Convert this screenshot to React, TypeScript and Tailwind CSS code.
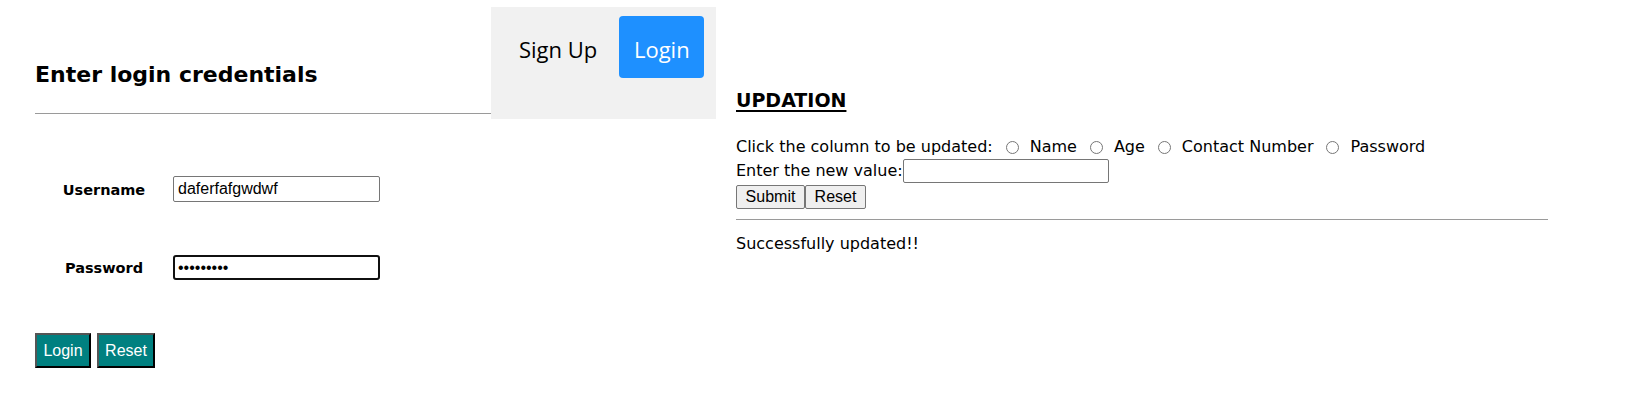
import React from "react";

const comic = { fontFamily: '"DejaVu Sans", sans-serif' };

export default function App() {
  return (
    <div className="w-[1649px] h-[406px] bg-white text-black flex pt-[7px]" style={comic}>
      {/* Left column */}
      <div className="ml-[35px] w-[681px] flex flex-col">
        <div className="flex">
          <div className="flex-1 flex flex-col">
            <h2 className="mt-[54px] h-[28px] leading-[28px] text-[22px] font-bold">Enter login credentials</h2>
            <div className="mt-[24px] h-px bg-[#9a9a9a]" />
          </div>
          <div className="w-[225px] h-[112px] bg-[#f1f1f1] flex items-start pt-[9px]" style={{ fontFamily: '"Open Sans", sans-serif' }}>
            <div className="ml-[28px] h-[62px] pt-[4px] flex items-center text-[22px]">Sign Up</div>
            <div className="ml-[22px] w-[85px] h-[62px] pt-[4px] rounded-[4px] bg-[#1e90ff] text-white flex items-center justify-center text-[22px]">
              Login
            </div>
          </div>
        </div>

        <div className="mt-[57px] flex items-center h-[26px]">
          <div className="w-[138px] pt-[3px] text-center text-[14.5px] font-bold">Username</div>
          <input
            readOnly
            value="daferfafgwdwf"
            className="w-[207px] h-[26px] border border-[#767676] rounded-[2px] px-[4px] text-[16px] outline-none"
            style={{ fontFamily: '"Liberation Sans", Arial, sans-serif' }}
          />
        </div>

        <div className="mt-[53px] flex items-center h-[25px]">
          <div className="w-[138px] pt-[2px] text-center text-[14.5px] font-bold">Password</div>
          <input
            readOnly
            type="password"
            value="123456789"
            className="w-[207px] h-[25px] border-2 border-[#101010] rounded-[3px] px-[3px] text-[16px] outline-none"
            style={{ fontFamily: '"Liberation Sans", Arial, sans-serif' }}
          />
        </div>

        <div className="mt-[53px] flex gap-[6px]" style={{ fontFamily: '"Liberation Sans", Arial, sans-serif' }}>
          <button className="w-[56px] h-[35px] bg-[#008080] text-white text-[16px] border-2 border-t-[#555] border-l-[#555] border-b-black border-r-black">
            Login
          </button>
          <button className="w-[58px] h-[35px] bg-[#008080] text-white text-[16px] border-2 border-t-[#555] border-l-[#555] border-b-black border-r-black">
            Reset
          </button>
        </div>
      </div>

      {/* Right column */}
      <div className="ml-[20px] w-[812px] flex flex-col">
        <h3 className="mt-[81px] h-[24px] leading-[24px] text-[19px] font-bold underline underline-offset-[3px] decoration-[1.5px]">
          UPDATION
        </h3>
        <div className="mt-[24px] h-[22px] leading-[22px] flex items-center text-[16px]">
          <span>Click the column to be updated:</span>
          <input type="radio" name="col" className="w-[13px] h-[13px] ml-[13px] mr-[11px] m-0" />
          <span>Name</span>
          <input type="radio" name="col" className="w-[13px] h-[13px] ml-[13px] mr-[11px] m-0" />
          <span>Age</span>
          <input type="radio" name="col" className="w-[13px] h-[13px] ml-[13px] mr-[11px] m-0" />
          <span>Contact Number</span>
          <input type="radio" name="col" className="w-[13px] h-[13px] ml-[13px] mr-[11px] m-0" />
          <span>Password</span>
        </div>
        <div className="mt-px h-[24px] flex items-center text-[16px]">
          <span>Enter the new value:</span>
          <input className="w-[206px] h-[24px] border border-[#767676] rounded-[2px] outline-none" />
        </div>
        <div className="mt-[2px] flex" style={{ fontFamily: '"Liberation Sans", Arial, sans-serif' }}>
          <button className="w-[69px] h-[24px] bg-[#efefef] border border-[#767676] rounded-[2px] text-[16px] leading-none">
            Submit
          </button>
          <button className="w-[61px] h-[24px] bg-[#efefef] border border-[#767676] rounded-[2px] text-[16px] leading-none">
            Reset
          </button>
        </div>
        <div className="mt-[10px] h-px bg-[#9a9a9a]" />
        <div className="mt-[13px] h-[22px] leading-[22px] text-[16px]">Successfully updated!!</div>
      </div>
    </div>
  );
}
